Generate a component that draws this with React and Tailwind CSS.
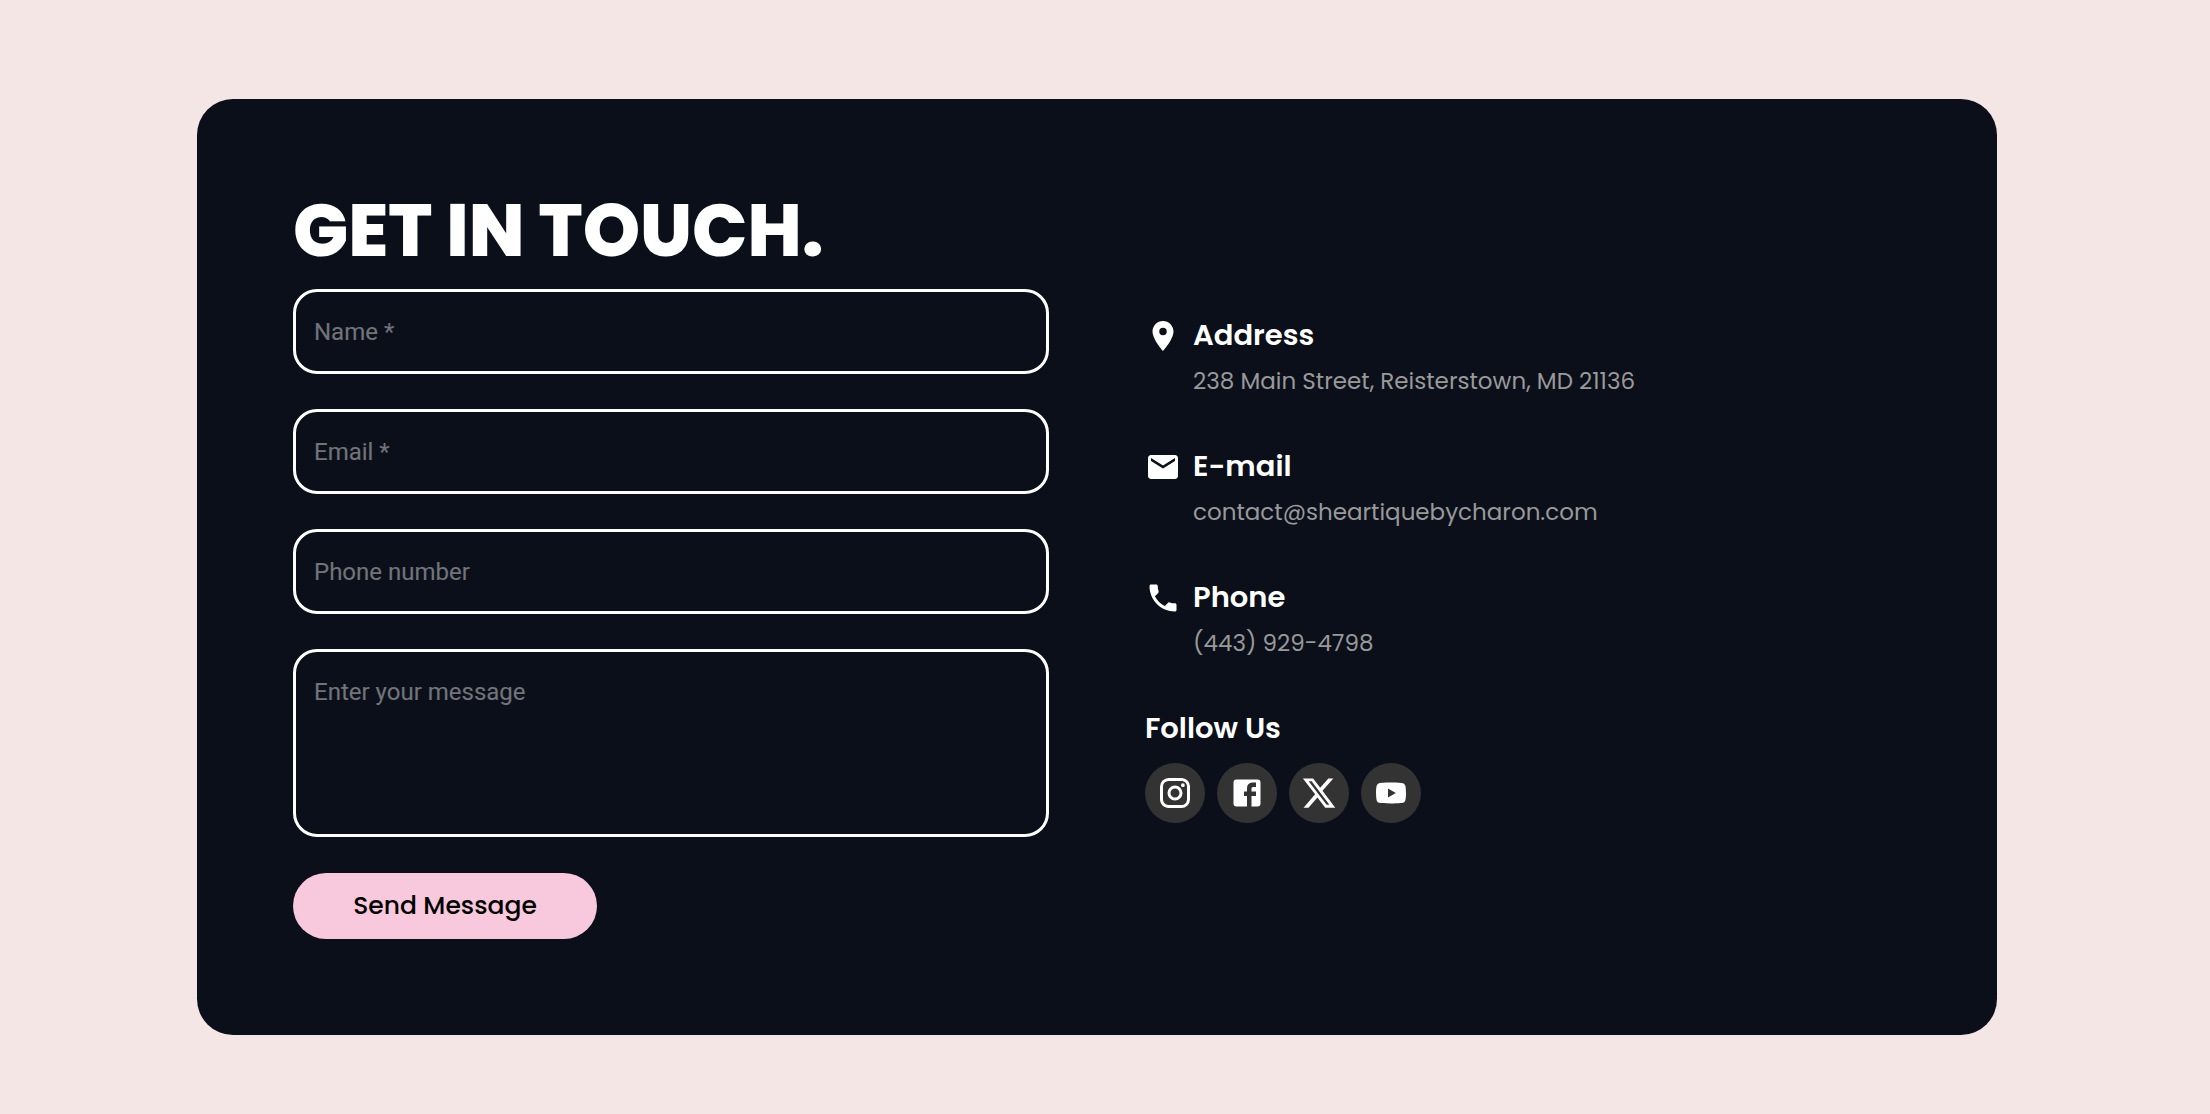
import React from 'react';
import { MdEmail, MdLocationOn, MdPhone } from 'react-icons/md';
import { FaXTwitter } from 'react-icons/fa6';

const inputClass =
    "block w-full rounded-3xl border-3 border-white bg-transparent px-[18px] font-['Roboto',sans-serif] text-2xl text-white placeholder:text-white/42 outline-none";

const contacts = [
    { icon: MdLocationOn, title: 'Address', text: '238 Main Street, Reisterstown, MD 21136' },
    { icon: MdEmail, title: 'E-mail', text: 'contact@sheartiquebycharon.com', href: 'mailto:contact@sheartiquebycharon.com' },
    { icon: MdPhone, title: 'Phone', text: '(443) 929-4798', href: 'tel:+14439294798' },
];

function InstagramIcon({ className }) {
    return (
        <svg className={className} viewBox="0 0 24 24" fill="currentColor" aria-hidden="true">
            <path d="M7.8 2h8.4C19.4 2 22 4.6 22 7.8v8.4a5.8 5.8 0 0 1-5.8 5.8H7.8C4.6 22 2 19.4 2 16.2V7.8A5.8 5.8 0 0 1 7.8 2m-.2 2A3.6 3.6 0 0 0 4 7.6v8.8C4 18.39 5.61 20 7.6 20h8.8a3.6 3.6 0 0 0 3.6-3.6V7.6C20 5.61 18.39 4 16.4 4H7.6m9.65 1.5a1.25 1.25 0 0 1 1.25 1.25A1.25 1.25 0 0 1 17.25 8 1.25 1.25 0 0 1 16 6.75a1.25 1.25 0 0 1 1.25-1.25M12 7a5 5 0 0 1 5 5 5 5 0 0 1-5 5 5 5 0 0 1-5-5 5 5 0 0 1 5-5m0 2a3 3 0 0 0-3 3 3 3 0 0 0 3 3 3 3 0 0 0 3-3 3 3 0 0 0-3-3z" />
        </svg>
    );
}

function FacebookIcon({ className }) {
    return (
        <svg className={className} viewBox="0 0 24 24" fill="currentColor" aria-hidden="true">
            <path d="M5 3h14a2 2 0 0 1 2 2v14a2 2 0 0 1-2 2h-4v-7h3v-3h-3V9a1 1 0 0 1 1-1h2V5h-2.500A3.500 3.500 0 0 0 12 8.500V11h-2v3h2v7H5a2 2 0 0 1-2-2V5a2 2 0 0 1 2-2z" />
        </svg>
    );
}

function YoutubeIcon({ className }) {
    return (
        <svg className={className} viewBox="0 0 24 24" fill="currentColor" aria-hidden="true">
            <path d="M10 15l5.19-3L10 9v6m11.56-7.83c.13.47.22 1.1.28 1.9.07.8.1 1.49.1 2.09L22 12c0 2.19-.16 3.8-.44 4.83-.25.9-.83 1.48-1.73 1.73-.47.13-1.33.22-2.65.28-1.3.07-2.49.1-3.59.1L12 19c-4.19 0-6.8-.16-7.83-.44-.9-.25-1.48-.83-1.73-1.73-.13-.47-.22-1.1-.28-1.9-.07-.8-.1-1.49-.1-2.09L2 12c0-2.19.16-3.8.44-4.83.25-.9.83-1.48 1.73-1.73.47-.13 1.33-.22 2.65-.28 1.3-.07 2.49-.1 3.59-.1L12 5c4.19 0 6.8.16 7.83.44.9.25 1.48.83 1.73 1.73z" />
        </svg>
    );
}

const socials = [
    { label: 'Instagram', icon: InstagramIcon },
    { label: 'Facebook', icon: FacebookIcon },
    { label: 'X', icon: FaXTwitter },
    { label: 'YouTube', icon: YoutubeIcon },
];

function ContactForm() {
    return (
        <form onSubmit={(e) => e.preventDefault()}>
            <div className="space-y-[35px]">
                <input type="text" aria-label="Name" placeholder="Name *" className={`${inputClass} h-[85px]`} />
                <input type="email" aria-label="Email" placeholder="Email *" className={`${inputClass} h-[85px]`} />
                <input type="tel" aria-label="Phone number" placeholder="Phone number" className={`${inputClass} h-[85px]`} />
                <textarea aria-label="Message" placeholder="Enter your message" className={`${inputClass} h-[188px] resize-none py-6`} />
            </div>
            <button type="submit" className="mt-9 h-[66px] min-w-[304px] cursor-pointer rounded-full bg-[#f8c8dc] px-14 text-[25px] font-medium text-black">
                Send Message
            </button>
        </form>
    );
}

function ContactInfo() {
    return (
        <div className="lg:pt-[119px]">
            {contacts.map(({ icon: Icon, title, text, href }) => (
                <div key={title} className="mb-11">
                    <div className="flex items-center gap-3">
                        <Icon className="size-9 text-white" />
                        <h2 className="text-[29px] leading-[43px] font-semibold text-white">{title}</h2>
                    </div>
                    <p className="mt-1 pl-12 text-[23px] leading-10 text-[#999999]">
                        {href ? <a href={href}>{text}</a> : text}
                    </p>
                </div>
            ))}
            <h2 className="text-[29px] leading-[43px] font-semibold text-white">Follow Us</h2>
            <div className="mt-[13px] flex gap-3">
                {socials.map(({ label, icon: Icon }) => (
                    <a key={label} href="#" aria-label={label} className="flex size-[60px] items-center justify-center rounded-full bg-[#333333] text-white">
                        <Icon className="size-9" />
                    </a>
                ))}
            </div>
        </div>
    );
}

function App() {
    return (
        <div className="min-h-screen bg-[#f5e6e6] pt-[99px] pr-4 pb-[77px] font-['Poppins',sans-serif]">
            <section className="mx-auto grid max-w-[1800px] gap-24 rounded-[36px] bg-[#0b0f19] p-24 lg:grid-cols-2">
                <div>
                    <h1 className="pb-[22px] text-[73px] leading-[72px] font-extrabold text-white">GET IN TOUCH.</h1>
                    <ContactForm />
                </div>
                <ContactInfo />
            </section>
        </div>
    );
}

export default App;
